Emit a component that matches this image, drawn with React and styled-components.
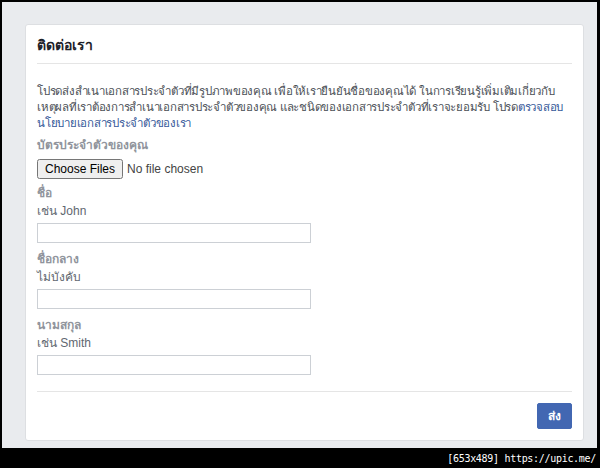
import styled, { createGlobalStyle } from "styled-components";

const GlobalStyle = createGlobalStyle`
  html, body {
    margin: 0;
    padding: 0;
    background: #000;
  }
  body {
    font-family: Tahoma, "Liberation Sans", "Noto Sans", sans-serif;
  }
`;

const Frame = styled.div`
  width: 600px;
  height: 468px;
  background: #000;
  display: flex;
  flex-direction: column;
  box-sizing: border-box;
  padding: 2px 3px 0 2px;
`;

const Page = styled.div`
  background: #e9ebee;
  height: 446px;
  box-sizing: border-box;
  padding: 22px 13px 0 23px;
`;

const Card = styled.div`
  background: #fff;
  border: 1px solid #dddfe2;
  border-radius: 3px;
  box-sizing: border-box;
  height: 417px;
  padding: 0 11px;
  display: flex;
  flex-direction: column;
`;

const Header = styled.div`
  height: 39px;
  border-bottom: 1px solid #e5e5e5;
  display: flex;
  align-items: center;
  padding-top: 2px;
  box-sizing: border-box;
`;

const Title = styled.h2`
  margin: 0;
  font-size: 14px;
  font-weight: bold;
  color: #1d2129;
  line-height: 18px;
`;

const Body = styled.div`
  padding-top: 19px;
  flex: 1;
`;

const Intro = styled.p`
  margin: 0 0 5px;
  font-size: 11.5px;
  letter-spacing: -0.25px;
  line-height: 16px;
  color: #4b4f56;
  white-space: nowrap;
`;

const Link = styled.a`
  color: #365899;
  text-decoration: none;
`;

const Label = styled.div`
  font-size: 12px;
  line-height: 18px;
  font-weight: bold;
  color: #90949c;
`;

const Hint = styled.div`
  font-size: 12px;
  line-height: 18px;
  color: #616770;
`;

const FileRow = styled.div`
  height: 30px;
  display: flex;
  align-items: flex-start;
  padding-top: 5px;
  box-sizing: border-box;
`;

const FileInput = styled.input`
  font-family: "Liberation Sans", Arial, sans-serif;
  font-size: 12px;
  color: #444;
`;

const Field = styled.div`
  margin-bottom: 7px;
`;

const TextInput = styled.input`
  display: block;
  margin-top: 3px;
  width: 274px;
  height: 20px;
  box-sizing: border-box;
  border: 1px solid #ccd0d5;
  border-radius: 0;
  padding: 2px 4px;
  font-size: 12px;
  outline: none;
`;

const Footer = styled.div`
  border-top: 1px solid #e5e5e5;
  height: 49px;
  display: flex;
  justify-content: flex-end;
  align-items: center;
  padding-bottom: 1px;
  box-sizing: border-box;
`;

const SubmitButton = styled.button`
  width: 35px;
  height: 26px;
  background: #4267b2;
  border: 1px solid #4267b2;
  border-radius: 2px;
  color: #fff;
  font-family: inherit;
  font-size: 12px;
  font-weight: bold;
  padding: 0;
  cursor: pointer;
`;

const Watermark = styled.div`
  flex: 1;
  display: flex;
  align-items: center;
  justify-content: flex-end;
  padding-right: 1px;
  color: #fff;
  font-family: "DejaVu Sans Mono", monospace;
  font-size: 10px;
  letter-spacing: -0.3px;
`;

const fields = [
  { label: "ชื่อ", hint: "เช่น John" },
  { label: "ชื่อกลาง", hint: "ไม่บังคับ" },
  { label: "นามสกุล", hint: "เช่น Smith" },
];

export default function App() {
  return (
    <>
      <GlobalStyle />
      <Frame>
        <Page>
          <Card>
            <Header>
              <Title>ติดต่อเรา</Title>
            </Header>
            <Body>
              <Intro>
                โปรดส่งสำเนาเอกสารประจำตัวที่มีรูปภาพของคุณ เพื่อให้เรายืนยันชื่อของคุณได้ ในการเรียนรู้เพิ่มเติมเกี่ยวกับ
                <br />
                เหตุผลที่เราต้องการสำเนาเอกสารประจำตัวของคุณ และชนิดของเอกสารประจำตัวที่เราจะยอมรับ โปรด
                <Link href="#">
                  ตรวจสอบ
                  <br />
                  นโยบายเอกสารประจำตัวของเรา
                </Link>
              </Intro>
              <Label>บัตรประจำตัวของคุณ</Label>
              <FileRow>
                <FileInput type="file" multiple />
              </FileRow>
              {fields.map((f) => (
                <Field key={f.label}>
                  <Label>{f.label}</Label>
                  <Hint>{f.hint}</Hint>
                  <TextInput type="text" />
                </Field>
              ))}
            </Body>
            <Footer>
              <SubmitButton>ส่ง</SubmitButton>
            </Footer>
          </Card>
        </Page>
        <Watermark>[653x489] https://upic.me/</Watermark>
      </Frame>
    </>
  );
}
